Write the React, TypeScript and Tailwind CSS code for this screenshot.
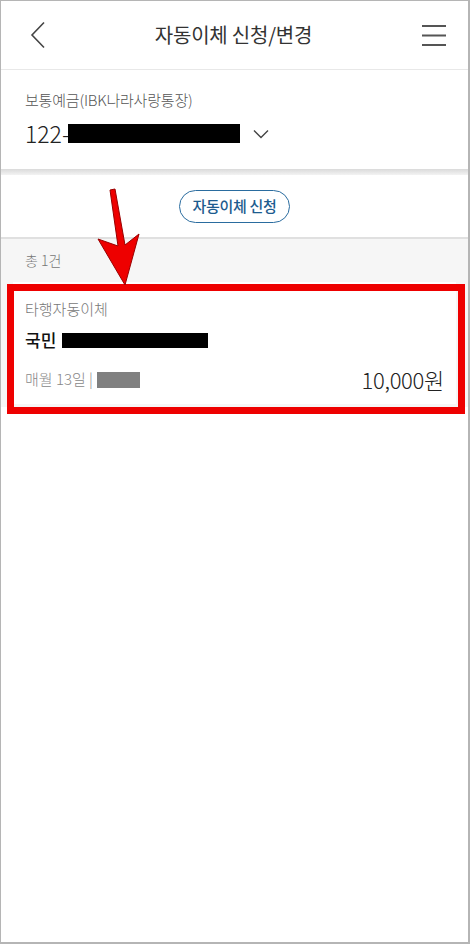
import React from 'react';

const font = { fontFamily: '"Noto Sans CJK KR", "Noto Sans", sans-serif' };

const BackIcon = () => (
  <svg width="16" height="28" viewBox="0 0 16 28" fill="none">
    <path d="M14 1.5 L2 14 L14 26.5" stroke="#444" strokeWidth="1.6" />
  </svg>
);

const MenuIcon = () => (
  <svg width="26" height="22" viewBox="0 0 26 22" fill="none">
    <path d="M1 2 H25 M1 11.5 H25 M1 21 H25" stroke="#555" strokeWidth="1.8" />
  </svg>
);

const ChevronDown = () => (
  <svg width="16" height="10" viewBox="0 0 16 10" fill="none">
    <path d="M1 1.5 L8 8.5 L15 1.5" stroke="#444" strokeWidth="1.4" />
  </svg>
);

// 스크린샷 위의 빨간 화살표 (주석 표시)
const RedArrow = () => (
  <svg className="absolute left-0 top-0" width="470" height="300" viewBox="0 0 470 300" fill="none">
    <polygon
      points="109,189 114,188 124,244 138,233 124,284 97,238 117,245"
      fill="#ee0000"
      stroke="#990000"
      strokeWidth="1"
      strokeLinejoin="round"
    />
  </svg>
);

const App: React.FC = () => {
  return (
    <div
      className="relative w-[470px] h-[944px] bg-white border-l border-t border-r-2 border-b-2 border-[#b5b5b5] flex flex-col overflow-hidden font-light"
      style={font}
    >
      {/* 헤더 */}
      <div className="h-[69px] shrink-0 flex items-center justify-between pl-[29px] pr-[21px] border-b border-[#e8e8e8]">
        <BackIcon />
        <h1 className="text-[20px] text-[#333] tracking-[-0.2px] font-normal">자동이체 신청/변경</h1>
        <MenuIcon />
      </div>

      {/* 계좌 선택 */}
      <div className="h-[99px] shrink-0 px-[24px] pt-[20px]">
        <div className="text-[15px] leading-[20px] text-[#555] tracking-[-0.2px]">보통예금(IBK나라사랑통장)</div>
        <div className="mt-[10px] flex items-center">
          <span className="text-[23px] leading-[26px] text-[#222]">122-</span>
          <span className="w-[172px] h-[19px] bg-black -ml-[2px]" />
          <span className="ml-[13px] mt-[2px]">
            <ChevronDown />
          </span>
        </div>
      </div>
      <div className="h-[6px] shrink-0 bg-gradient-to-b from-[#dadada] to-[#f3f3f3]" />

      {/* 신청 버튼 */}
      <div className="h-[64px] shrink-0 flex items-center justify-center border-b-2 border-[#e0e0e0]">
        <button className="h-[33px] px-[12px] rounded-full border-[1.5px] border-[#2a6c9f] text-[15px] text-[#1d5c8f] font-medium tracking-[-0.3px]">
          자동이체 신청
        </button>
      </div>

      {/* 목록 */}
      <div className="shrink-0 bg-[#f6f6f6] px-[12px] pb-[3px]">
        <div className="h-[43px] flex items-center pl-[12px] text-[14px] text-[#777]">총 1건</div>
        <div className="bg-white h-[122px] pl-[12px] pr-[12px] pt-[17px]">
          <div className="text-[15px] leading-[20px] text-[#777]">타행자동이체</div>
          <div className="mt-[10px] flex items-center">
            <span className="text-[17px] leading-[22px] font-medium text-[#111]">국민</span>
            <span className="ml-[6px] w-[146px] h-[15px] bg-black" />
          </div>
          <div className="mt-[12px] flex items-center justify-between">
            <div className="flex items-center">
              <span className="text-[15px] text-[#888]">매월 13일 |</span>
              <span className="ml-[4px] w-[43px] h-[16px] bg-[#808080]" />
            </div>
            <span className="text-[22px] text-[#222] tracking-[-0.3px]">10,000원</span>
          </div>
        </div>
      </div>
      <div className="flex-1 bg-white" />

      {/* 주석: 빨간 박스와 화살표 */}
      <div className="absolute left-[6px] top-[283px] w-[458px] h-[130px] border-[7px] border-[#ee0000] pointer-events-none" />
      <RedArrow />
    </div>
  );
};

export default App;
